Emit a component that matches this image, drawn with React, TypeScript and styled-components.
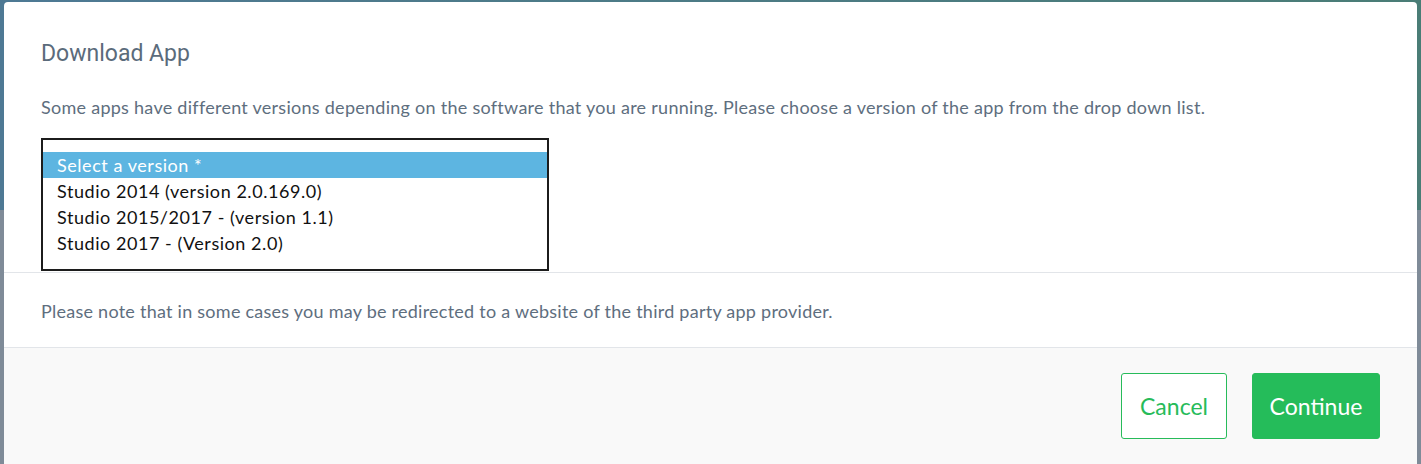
import React from "react";
import styled, { createGlobalStyle } from "styled-components";

const Global = createGlobalStyle`
  html, body { margin: 0; padding: 0; }
  body { font-family: "Lato", "Open Sans", sans-serif; }
`;

const Page = styled.div`
  width: 1421px;
  height: 464px;
  overflow: hidden;
  box-sizing: border-box;
  padding: 2px 4px 0 4px;
  background:
    linear-gradient(to bottom, transparent 210px, #7f8b98 210px),
    linear-gradient(to right, #4e7994, #4a7d76);
`;

const Modal = styled.div`
  background: #ffffff;
  border-radius: 4px 4px 0 0;
  height: 480px;
  display: flex;
  flex-direction: column;
`;

const Header = styled.div`
  padding: 37px 37px 1px 37px;
  border-bottom: 1px solid #e2e5e9;
`;

const Title = styled.h2`
  margin: 0;
  font-family: "Roboto", "Open Sans", sans-serif;
  font-weight: 400;
  font-size: 23px;
  line-height: 30px;
  color: #5b6b7b;
`;

const Lead = styled.p`
  margin: 26px 0 19px 0;
  font-size: 18px;
  letter-spacing: 0.27px;
  line-height: 24px;
  color: #5e6e7e;
`;

const ListBox = styled.ul`
  list-style: none;
  margin: 0;
  width: 508px;
  box-sizing: border-box;
  border: 2px solid #1c1c1c;
  padding: 12px 0 13px 0;
`;

const Option = styled.li<{ $selected?: boolean }>`
  height: 26px;
  line-height: 26px;
  padding: 0 14px;
  font-size: 18px;
  letter-spacing: 0.55px;
  color: ${(p) => (p.$selected ? "#ffffff" : "#111111")};
  background: ${(p) => (p.$selected ? "#5db5e1" : "transparent")};
`;

const Note = styled.div`
  padding: 26px 37px 24px 37px;
  border-bottom: 1px solid #e2e5e9;
  font-size: 18px;
  letter-spacing: 0.25px;
  line-height: 24px;
  color: #5e6e7e;
`;

const Footer = styled.div`
  flex: 1;
  background: #f9f9f9;
  display: flex;
  justify-content: flex-end;
  align-items: flex-start;
  gap: 25px;
  padding: 25px 37px 0 37px;
`;

const Button = styled.button<{ $primary?: boolean }>`
  height: 66px;
  box-sizing: border-box;
  padding: 0;
  width: ${(p) => (p.$primary ? "128px" : "106px")};
  border-radius: 3px;
  font-family: "Lato", "Open Sans", sans-serif;
  font-size: 23px;
  cursor: pointer;
  border: 1px solid #27bb5a;
  color: ${(p) => (p.$primary ? "#ffffff" : "#27bb5a")};
  background: ${(p) => (p.$primary ? "#25bc5a" : "#ffffff")};
`;

export default function App() {
  return (
    <>
      <Global />
      <Page>
        <Modal>
          <Header>
            <Title>Download App</Title>
            <Lead>
              Some apps have different versions depending on the software that you are running. Please choose a
              version of the app from the drop down list.
            </Lead>
            <ListBox>
              <Option $selected>Select a version *</Option>
              <Option>Studio 2014 (version 2.0.169.0)</Option>
              <Option>Studio 2015/2017 - (version 1.1)</Option>
              <Option>Studio 2017 - (Version 2.0)</Option>
            </ListBox>
          </Header>
          <Note>Please note that in some cases you may be redirected to a website of the third party app provider.</Note>
          <Footer>
            <Button>Cancel</Button>
            <Button $primary>Continue</Button>
          </Footer>
        </Modal>
      </Page>
    </>
  );
}
